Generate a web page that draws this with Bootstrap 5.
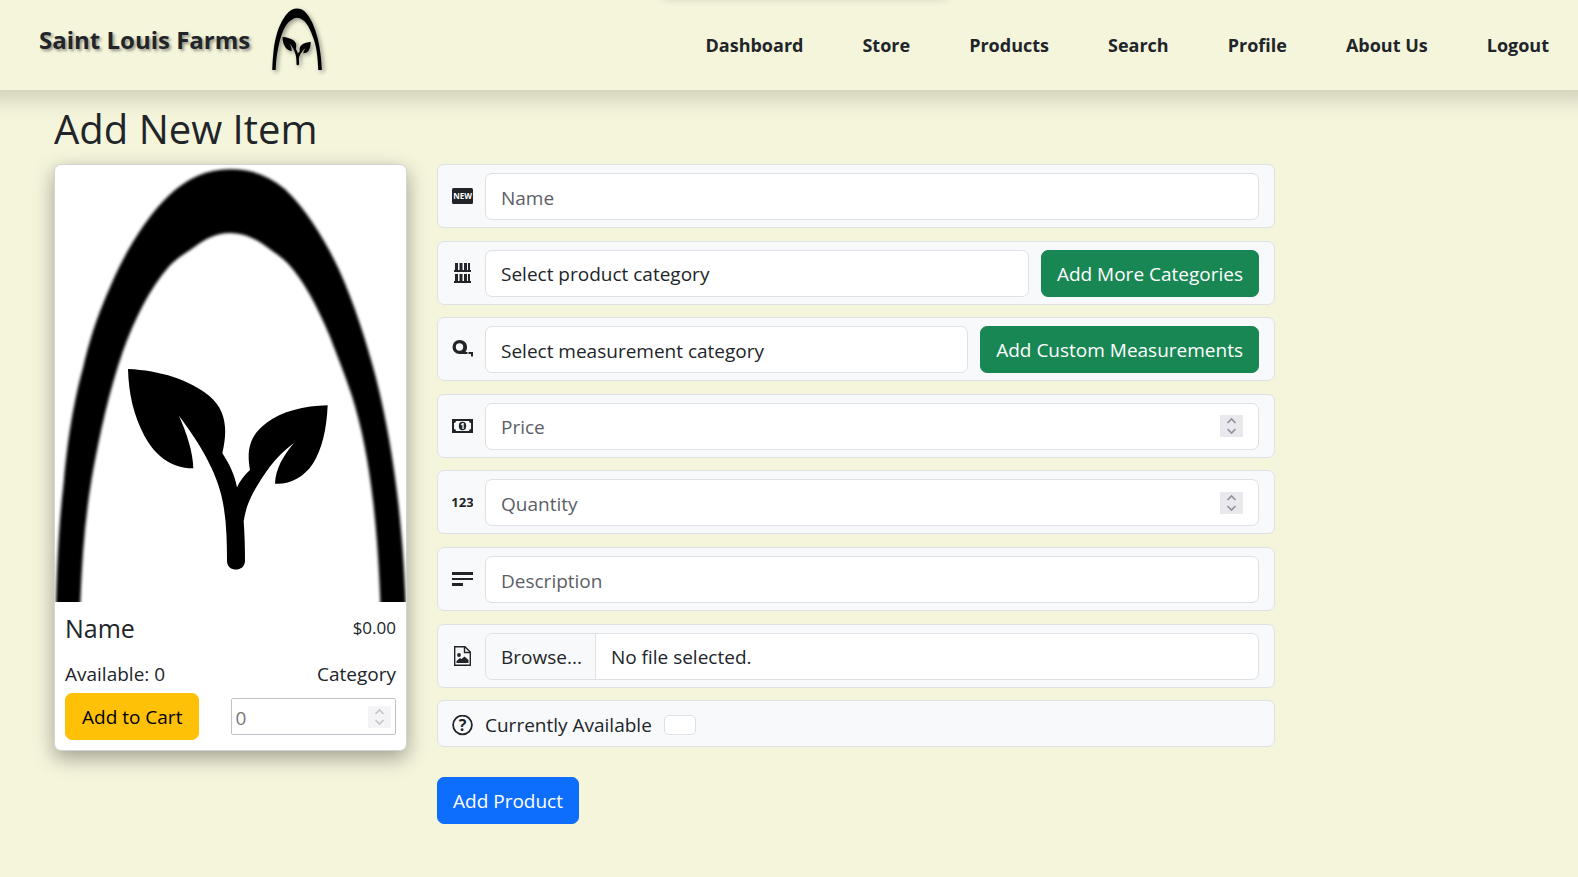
<!DOCTYPE html>
<html lang="en">
<head>
<meta charset="utf-8">
<meta name="viewport" content="width=device-width, initial-scale=1">
<title>Saint Louis Farms - Add New Item</title>
<link href="https://cdn.jsdelivr.net/npm/bootstrap@5.3.0/dist/css/bootstrap.min.css" rel="stylesheet">
<style>
  body { background: #f5f5dc; font-family: "Open Sans", "Noto Sans", sans-serif; font-size: 19px; line-height: 30px; color: #212529; }
  .site-header { position: relative; min-height: 90px; padding: 0 29px 0 39px; background: #f5f5dc; box-shadow: 0 -10px 20px 20px rgba(0,0,0,.15); }
  .top-glow { position: absolute; inset: 0; overflow: hidden; pointer-events: none; }
  .top-glow::before { content: ""; position: absolute; top: -11px; left: 42%; width: 18%; height: 10px; box-shadow: 0 0 10px rgba(0,0,0,.15); }
  .site-brand { gap: 22px; color: #212529; text-decoration: none; font-weight: 700; font-size: 24px; text-shadow: 2px 2px 3px rgba(0,0,0,.4); padding-bottom: 12px; }
  .site-brand span { padding-top: 2px; }
  .site-brand svg { width: 50px; height: 62px; filter: drop-shadow(2px 2px 2px rgba(0,0,0,.4)); }
  .site-links { gap: 12px 59px; font-size: 18px; font-weight: 700; }
  .site-links a { color: #212529; text-decoration: none; }
  .page-main { padding: 15px 54px 40px; }
  .page-title { font-size: 40px; line-height: 48px; font-weight: 500; margin-bottom: 11px; }
  .item-layout { display: grid; grid-template-columns: minmax(0,353fr) minmax(0,838fr) minmax(0,219fr); column-gap: 30px; row-gap: 26px; }
  .product-card { border: 1px solid #d4d4d4; border-radius: 7px; background: #fff; box-shadow: 0 7px 20px rgba(0,0,0,.35); overflow: hidden; }
  .product-card > svg { display: block; width: 100%; height: auto; }
  .product-info { padding: 10px; }
  .product-name { font-size: 25px; line-height: 30px; font-weight: 500; margin: 0; }
  .product-price { font-size: 17px; padding-top: 1px; }
  .btn { font-size: 19px; line-height: 30px; padding: 8px 15px 7px; border-radius: 7px; }
  .product-info .btn { padding-inline: 16px; }
  .form-control { font-size: 19px; line-height: 30px; min-height: 47px; padding: 8px 15px 6px; border-radius: 7px; border-color: #dee2e6; color: #212529; }
  .form-control::placeholder { color: #5c6066; }
  input[type=number] { appearance: textfield; -moz-appearance: textfield; background-repeat: no-repeat; background-position: right 15px center; background-image: url("data:image/svg+xml,%3Csvg xmlns='http://www.w3.org/2000/svg' width='23' height='22'%3E%3Crect width='23' height='22' fill='%23e9e9ed'/%3E%3Cpath d='M7.5 8l4-4 4 4M7.5 14l4 4 4-4' fill='none' stroke='%238f8f9d' stroke-width='1.6'/%3E%3C/svg%3E"); }
  input[type=number]::-webkit-inner-spin-button { appearance: none; -webkit-appearance: none; }
  .cart-count { width: 50%; height: 37px; padding: 2px 4px 0; border: 1px solid #c1c1c9; border-radius: 2px; background-color: #fff; background-position: right 4px center !important; color: #777; background-image: url("data:image/svg+xml,%3Csvg xmlns='http://www.w3.org/2000/svg' width='23' height='22'%3E%3Crect width='23' height='22' fill='%23f4f4f6'/%3E%3Cpath d='M7.5 8l4-4 4 4M7.5 14l4 4 4-4' fill='none' stroke='%23c4c4cc' stroke-width='1.6'/%3E%3C/svg%3E") !important; }
  .cart-count::placeholder { color: #777; }
  .field-list { padding-bottom: 4px; }
  .field-row { gap: 12px; padding: 8px 15px 7px 14px; border: 1px solid #dee2e6; border-radius: 7px; background: #f8f9fa; }
  .field-icon { flex: none; width: 21px; height: 21px; fill: #212529; }
  .field-icon text { font-family: "Open Sans", sans-serif; font-weight: 700; }
  .file-box { display: flex; padding: 0; overflow: hidden; cursor: pointer; }
  .file-box .browse { background: #f8f9fa; border-right: 1px solid #dee2e6; padding: 8px 13px 7px 15px; }
  .file-box .chosen { padding: 8px 15px 7px; }
  .avail-row { padding-top: 9px; padding-bottom: 6px; }
  .avail-box { appearance: none; width: 32px; height: 20px; border: 1px solid #dee2e6; border-radius: 5px; background: #fff; margin: 0; }
  .avail-box:checked { background: #0d6efd; }
  .submit-cell { grid-column: 2; }
</style>
</head>
<body>
<svg width="0" height="0" class="position-absolute" aria-hidden="true">
  <defs>
    <filter id="soft" x="-5%" y="-5%" width="110%" height="110%"><feGaussianBlur stdDeviation="4"/></filter>
    <symbol id="farm-logo" viewBox="45 45 1053 1312">
      <path filter="url(#soft)" d="M48 1420V1356C52 1220 58 1110 71 1000C84 850 105 740 130 650C155 545 180 480 213 405C255 305 320 200 385 138C440 86 500 58 570 58C640 58 690 80 735 118C800 180 855 270 895 355C945 465 980 580 1007 680C1040 810 1060 930 1075 1060C1087 1170 1093 1260 1097 1356V1420H1021V1356C1017 1250 1011 1160 1000 1060C985 930 965 830 935 735C915 675 895 625 870 560C830 465 790 390 745 342C725 320 705 310 685 294C650 268 615 249 570 249C530 249 495 266 462 292C435 311 412 322 385 352C330 415 285 505 250 600C205 730 180 850 156 980C134 1110 126 1230 121 1356V1420Z"/>
      <path d="M264 657C360 661 450 690 508 738C560 782 563 840 547 910C568 942 584 974 591 1012C600 992 614 974 630 960C619 900 629 855 680 818C725 785 792 767 863 766C860 840 845 900 818 942C791 982 750 1004 705 1001C707 955 730 917 762 879C700 925 671 975 641 1025C626 1052 616 1080 611 1114C614 1155 615 1195 615 1232C615 1267 561 1268 561 1232C561 1165 559 1094 543 1032C524 952 469 866 417 797C440 850 459 905 460 955C396 956 345 917 313 857C281 796 266 733 264 657Z"/>
    </symbol>
  </defs>
</svg>

<header class="site-header d-flex flex-wrap align-items-center justify-content-between">
  <div class="top-glow"></div>
  <a href="#" class="site-brand d-flex align-items-center">
    <span>Saint Louis Farms</span>
    <svg aria-hidden="true"><use href="#farm-logo"/></svg>
  </a>
  <nav class="site-links d-flex flex-wrap">
    <a href="#">Dashboard</a>
    <a href="#">Store</a>
    <a href="#">Products</a>
    <a href="#">Search</a>
    <a href="#">Profile</a>
    <a href="#">About Us</a>
    <a href="#">Logout</a>
  </nav>
</header>

<main class="page-main">
  <h1 class="page-title">Add New Item</h1>
  <form class="item-layout">
    <section class="product-card">
      <svg viewBox="0 0 1053 1312" role="img" aria-label="Product picture"><use href="#farm-logo" width="1053" height="1312"/></svg>
      <div class="product-info">
        <div class="d-flex justify-content-between align-items-center mb-3">
          <h2 class="product-name">Name</h2>
          <span class="product-price">$0.00</span>
        </div>
        <div class="d-flex justify-content-between mb-1">
          <span>Available: 0</span>
          <span>Category</span>
        </div>
        <div class="d-flex justify-content-between align-items-center">
          <button type="button" class="btn btn-warning">Add to Cart</button>
          <input type="number" class="cart-count" placeholder="0" aria-label="Amount">
        </div>
      </div>
    </section>

    <div class="field-list d-flex flex-column justify-content-between">
      <div class="field-row d-flex align-items-center">
        <svg class="field-icon" viewBox="0 0 21 21" aria-hidden="true"><rect y="2" width="21" height="16" rx="1.5"/><text x="10.5" y="13" font-size="8" text-anchor="middle" fill="#fff">NEW</text></svg>
        <input type="text" class="form-control" placeholder="Name" aria-label="Name">
      </div>
      <div class="field-row d-flex align-items-center">
        <svg class="field-icon" viewBox="0 0 21 21" aria-hidden="true"><path d="M3 0h3v7h1.500V0h3v7H12V0h3v7h1V0h2v7h1v2H2V7h1zM3 11h3v7h1.500v-7h3v7H12v-7h3v7h1v-7h2v7h1v2H2v-2h1z"/></svg>
        <select class="form-control" aria-label="Product category"><option>Select product category</option></select>
        <button type="button" class="btn btn-success flex-shrink-0">Add More Categories</button>
      </div>
      <div class="field-row d-flex align-items-center">
        <svg class="field-icon" viewBox="0 0 21 21" aria-hidden="true"><path fill-rule="evenodd" d="M7.500 1C12 1 15 4 15 8C15 10 14.500 11.500 13.500 13H15.500V15H7.500A7 7 0 0 1 7.500 1ZM7.500 4.300A3.700 3.700 0 1 0 7.500 11.700A3.700 3.700 0 1 0 7.500 4.300Z"/><path d="M16.500 13H21V17.500H19V15H16.500Z"/></svg>
        <select class="form-control" aria-label="Measurement category"><option>Select measurement category</option></select>
        <button type="button" class="btn btn-success flex-shrink-0">Add Custom Measurements</button>
      </div>
      <div class="field-row d-flex align-items-center">
        <svg class="field-icon" viewBox="0 0 21 21" aria-hidden="true"><path fill-rule="evenodd" d="M0 3H21V17H0ZM4 5A2 2 0 0 1 2 7V13A2 2 0 0 1 4 15H17A2 2 0 0 1 19 13V7A2 2 0 0 1 17 5Z"/><ellipse cx="10.500" cy="10" rx="3.700" ry="4.200"/><text x="10.500" y="13" font-size="8" text-anchor="middle" fill="#fff">1</text></svg>
        <input type="number" class="form-control" placeholder="Price" aria-label="Price">
      </div>
      <div class="field-row d-flex align-items-center">
        <svg class="field-icon" viewBox="0 0 21 21" aria-hidden="true"><text x="10.500" y="15" font-size="13" text-anchor="middle">123</text></svg>
        <input type="number" class="form-control" placeholder="Quantity" aria-label="Quantity">
      </div>
      <div class="field-row d-flex align-items-center">
        <svg class="field-icon" viewBox="0 0 21 21" aria-hidden="true"><path d="M0 3h21v3H0zM0 9h21v2H0zM0 14h11v3H0z"/></svg>
        <input type="text" class="form-control" placeholder="Description" aria-label="Description">
      </div>
      <div class="field-row d-flex align-items-center">
        <svg class="field-icon" viewBox="0 0 21 21" aria-hidden="true"><path d="M2.700 .7H13L18.300 6V19.300H2.700ZM12.500 .7V6.500H18.300" fill="none" stroke="#212529" stroke-width="1.400"/><circle cx="7" cy="9" r="1.900"/><path d="M4.500 17V15L8 12L9.500 13L12.500 10.500L16.500 14V17Z"/></svg>
        <label class="form-control file-box"><input type="file" class="visually-hidden"><span class="browse">Browse...</span><span class="chosen">No file selected.</span></label>
      </div>
      <div class="field-row avail-row d-flex align-items-center">
        <svg class="field-icon" viewBox="0 0 21 21" aria-hidden="true"><circle cx="10.500" cy="10" r="9.400" fill="none" stroke="#212529" stroke-width="1.800"/><text x="10.500" y="15.500" font-size="16" text-anchor="middle">?</text></svg>
        <label for="available">Currently Available</label>
        <input type="checkbox" id="available" class="avail-box">
      </div>
    </div>

    <div class="submit-cell"><button type="submit" class="btn btn-primary">Add Product</button></div>
  </form>
</main>
<script src="https://cdn.jsdelivr.net/npm/bootstrap@5.3.0/dist/js/bootstrap.bundle.min.js"></script>
</body>
</html>
